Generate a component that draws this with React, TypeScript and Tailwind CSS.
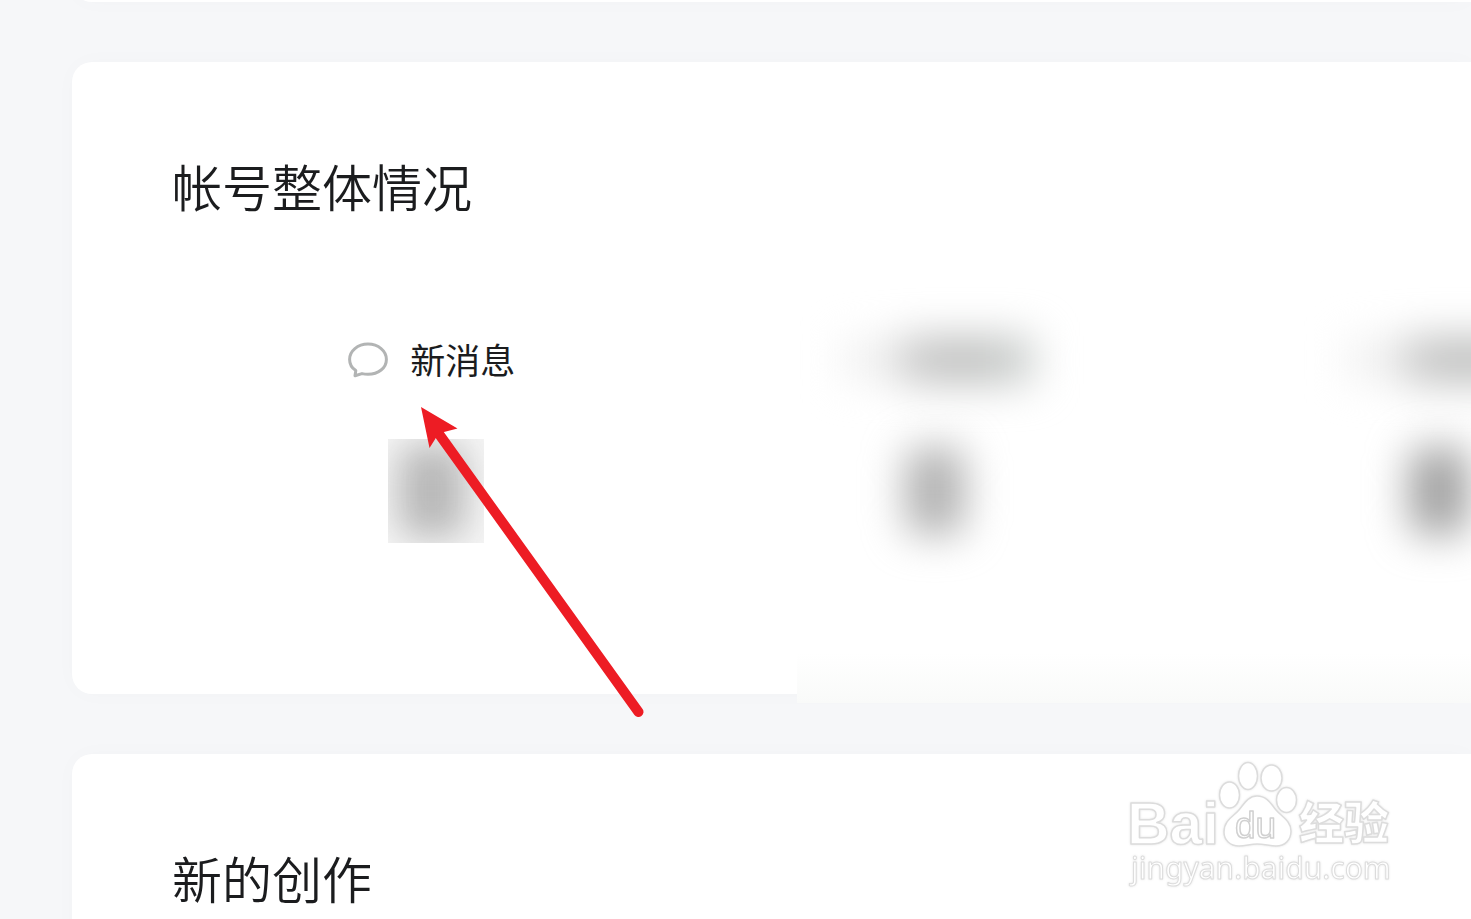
import type { ReactNode } from 'react'

interface Stat {
  label?: string
  dark?: boolean
}

const stats: Stat[] = [{ label: '新消息' }, {}, { dark: true }]

function MessageIcon() {
  return (
    <svg className="w-10 h-10 shrink-0" viewBox="0 0 40 40" fill="none" aria-hidden="true">
      <path
        d="M7.8 30.6C3.8 27.9 1.6 24 1.6 19.4C1.6 10.9 9.6 4.1 20 4.1C30.4 4.1 38.4 10.9 38.4 19.4C38.4 27.9 30.4 34.3 20 34.3C17.8 34.3 15.9 34.1 14 33.6L7 35.8Z"
        stroke="#b2b4b4"
        strokeWidth="3"
        strokeLinejoin="round"
      />
    </svg>
  )
}

function Card({ title, children }: { title: string; children?: ReactNode }) {
  return (
    <section className="bg-white rounded-l-[20px] pt-[87px] pb-[151px] shadow-[0_0_24px_rgba(0,0,0,0.02)]">
      <h2 className="pl-[100px] text-[50px] leading-[72px] font-[350]">{title}</h2>
      {children}
    </section>
  )
}

function StatItem({ label, dark }: Stat) {
  return (
    <li className="basis-[39%] shrink-0 flex flex-col items-center gap-[53px]">
      {label ? (
        <div className="flex items-center gap-[22px] h-[52px] text-[35px] leading-[50px]">
          <MessageIcon />
          <span className="h-[52px]">{label}</span>
        </div>
      ) : (
        <div className="flex items-center h-[52px] pl-2 blur-[20px]">
          <div className="w-[56px] h-[40px] bg-[#f0f0f0]" />
          <div className="w-[136px] h-[48px] bg-linear-to-r from-[#cccccc] via-[#bdbebd] to-[#d0d5d3]" />
        </div>
      )}
      {label ? (
        <div className="w-24 h-[104px] ml-2 overflow-hidden flex justify-center bg-[#f6f6f6]">
          <div className="w-[68px] h-[92px] mr-2 mt-[6px] rounded-2xl bg-[#b8b8b8] blur-[18px]" />
        </div>
      ) : (
        <div className="h-[104px] flex items-center">
          <div className={`w-[60px] h-[88px] rounded-2xl blur-[20px] ${dark ? 'bg-[#a2a2a2]' : 'bg-[#b2b2b2]'}`} />
        </div>
      )}
    </li>
  )
}

function Arrow() {
  return (
    <svg className="absolute left-[420px] top-[406px] w-[226px] h-[314px]" viewBox="420 406 226 314" aria-hidden="true">
      <path d="M439 434L638.500 712" stroke="#ed1c24" strokeWidth="10" strokeLinecap="round" />
      <path d="M421 407L457.500 428.500L444 432L436.500 437L429.500 448Z" fill="#ed1c24" />
    </svg>
  )
}

function Watermark() {
  return (
    <svg
      className="absolute right-[71px] bottom-[23px] w-[280px] h-[136px] drop-shadow-[0_0_1px_rgba(0,0,0,0.1)]"
      viewBox="1120 760 280 136"
      fill="#fff"
      stroke="#dcdcdc"
      strokeWidth="1.5"
      strokeLinejoin="round"
    >
      <text x="1127" y="844" className="font-['Liberation_Sans',sans-serif] text-[59px] font-bold">Bai</text>
      <ellipse cx="1229.500" cy="795" rx="10" ry="13" />
      <ellipse cx="1248" cy="776" rx="9.500" ry="13.500" />
      <ellipse cx="1271.500" cy="778" rx="10.500" ry="13" />
      <ellipse cx="1286.500" cy="800" rx="10" ry="12.500" />
      <path d="M1257 796C1248 796 1244 804 1239 810C1234 816 1224 820 1224 832C1224 840 1230 846 1239 846C1246 846 1250 844 1257 844C1264 844 1270 846 1276 846C1285 846 1291 840 1291 831C1291 821 1282 817 1276 810C1271 804 1267 796 1257 796Z" />
      <text x="1235" y="838" className="font-['Liberation_Sans',sans-serif] text-[37px]" stroke="#d0d0d0">du</text>
      <text x="1299" y="840" className="font-['Noto_Sans_CJK_SC',sans-serif] text-[45px] font-black">经验</text>
      <text x="1131" y="879" strokeWidth="1" className="font-['Noto_Sans',sans-serif] text-[30px]">
        jingyan.baidu.com
      </text>
    </svg>
  )
}

export default function App() {
  return (
    <main className="relative h-screen overflow-hidden bg-[#f6f7f9] pl-[72px] text-[#1b1c1e] font-['Noto_Sans_CJK_SC',sans-serif]">
      <div className="flex flex-col gap-[60px]">
        <div className="h-[22px] -mt-5 bg-white rounded-bl-[20px] shadow-[0_0_24px_rgba(0,0,0,0.02)]" />
        <Card title="帐号整体情况">
          <ul className="flex mt-[113px] pl-[108px]">
            {stats.map((s, i) => (
              <StatItem key={i} {...s} />
            ))}
          </ul>
        </Card>
        <Card title="新的创作" />
      </div>
      {/* soft edge under the hidden stats */}
      <div className="absolute left-[797px] right-0 top-[653px] h-[50px] bg-linear-to-b from-white to-[#f9faf9]" />
      <Arrow />
      <Watermark />
    </main>
  )
}
